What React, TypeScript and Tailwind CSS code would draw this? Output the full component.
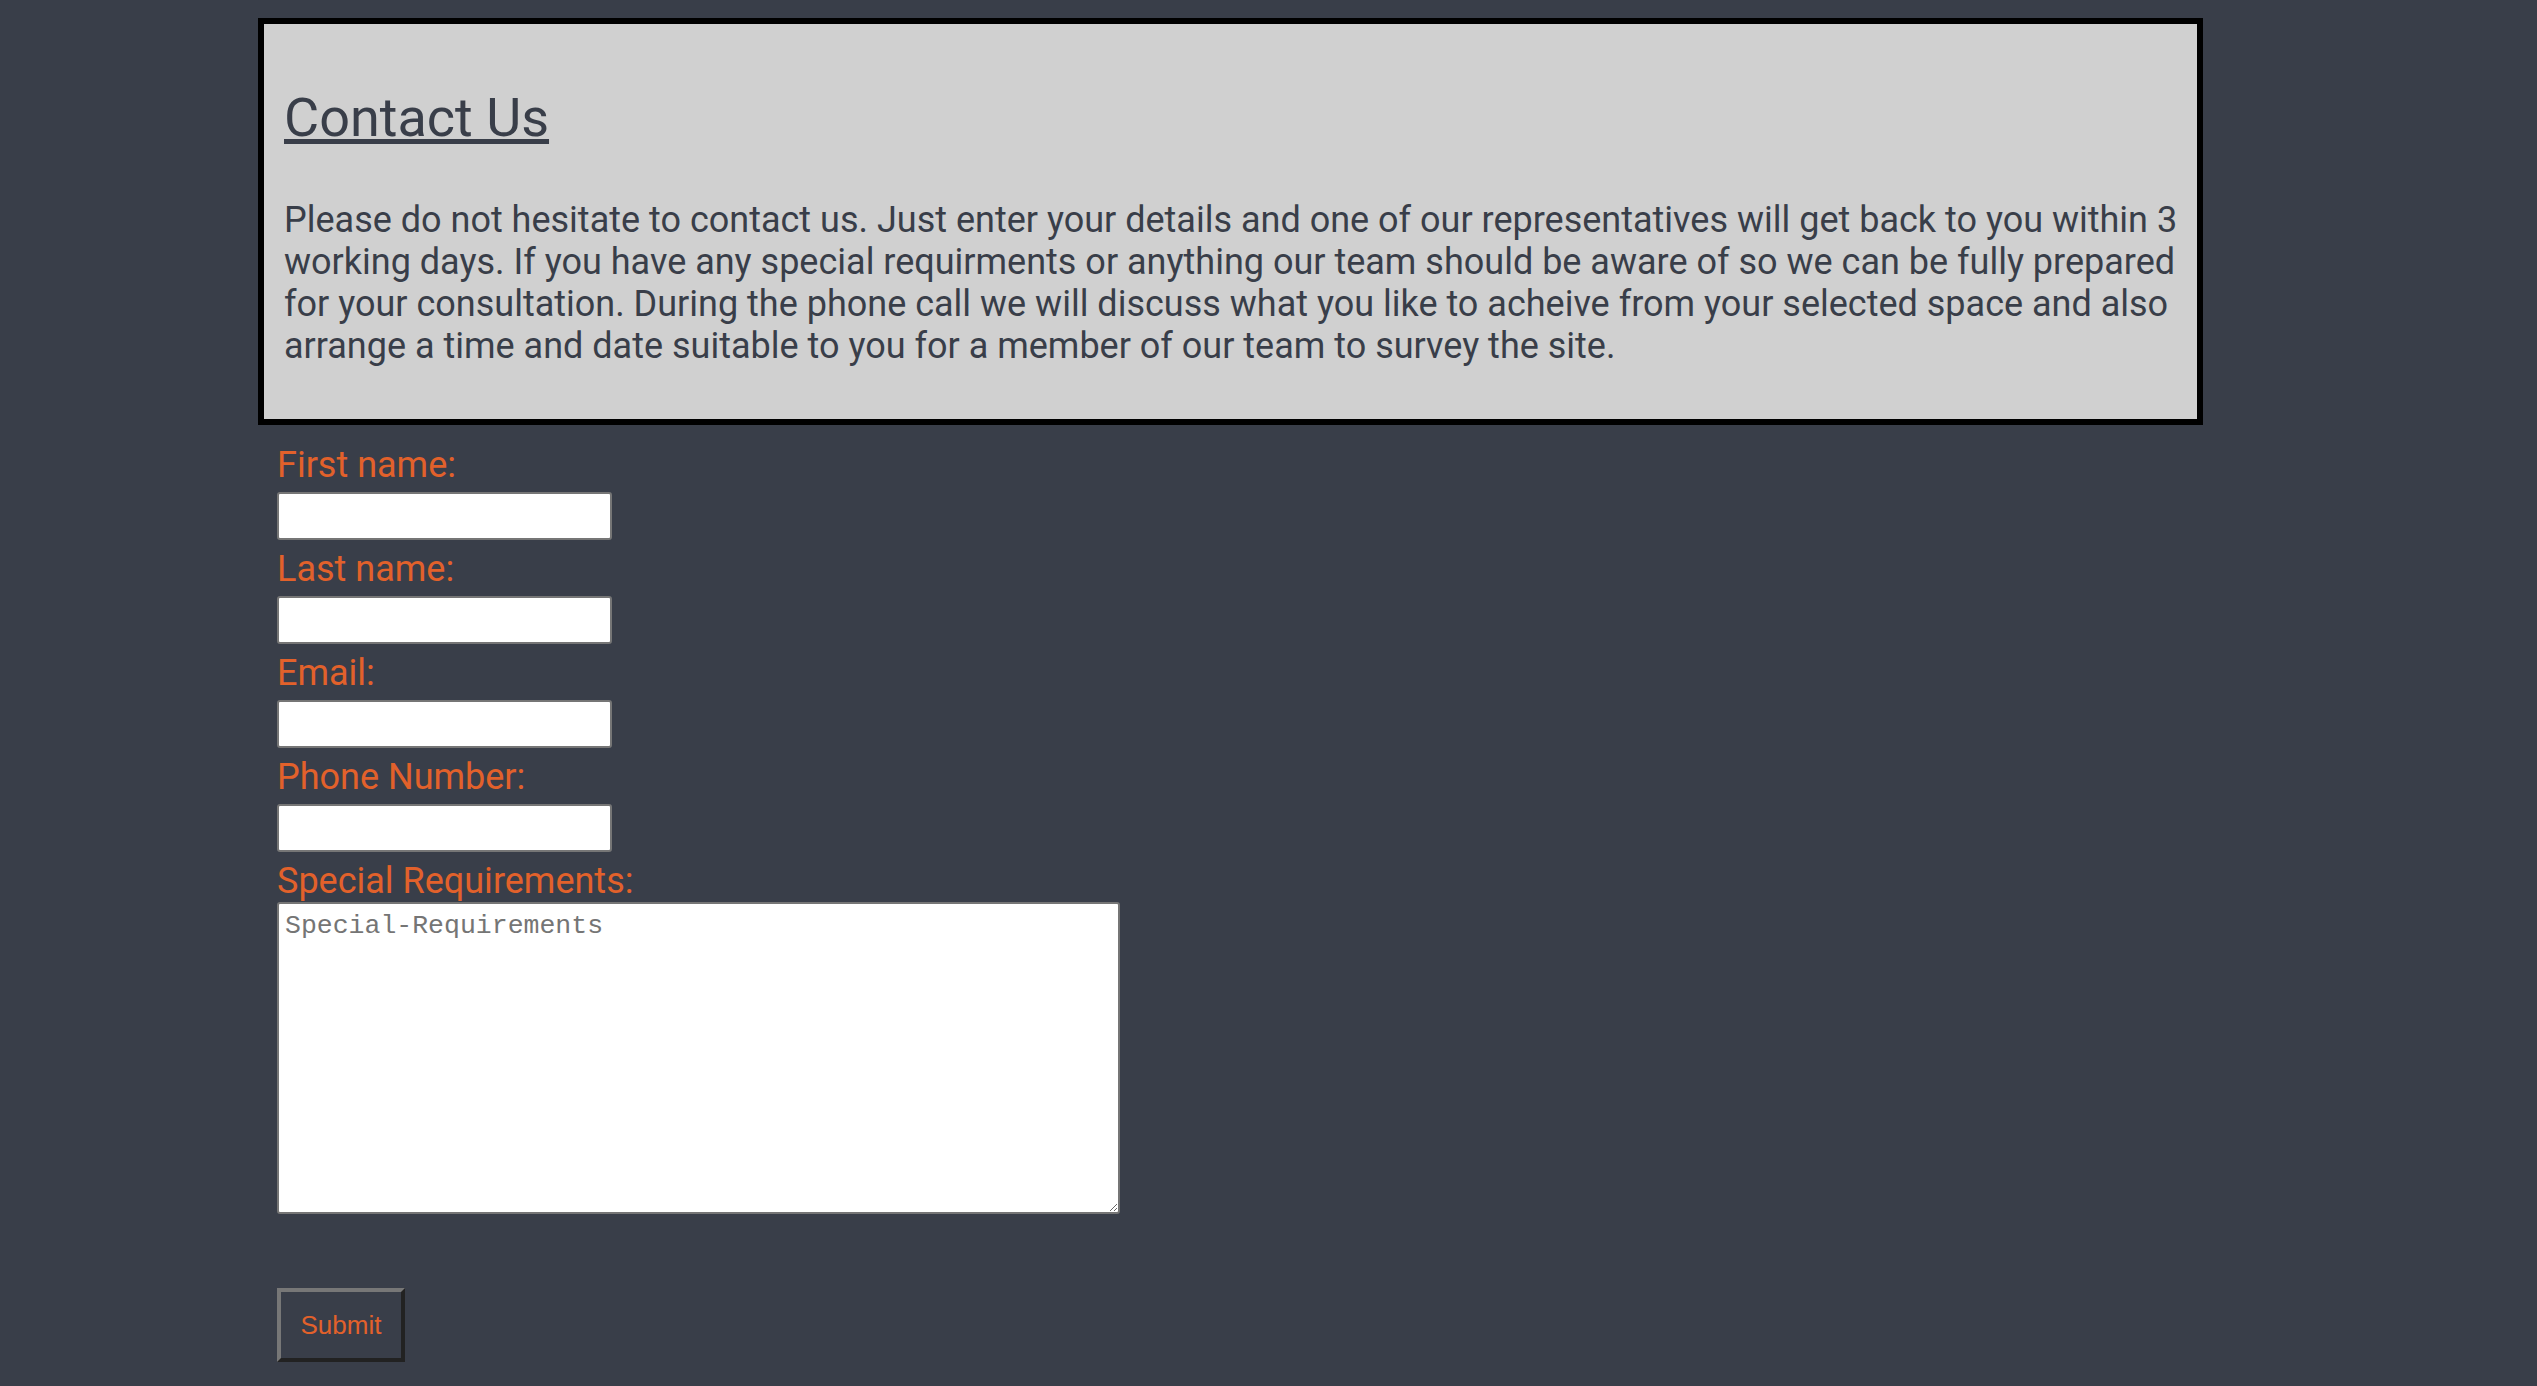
const fields = [
  { id: "fname", label: "First name:", type: "text" },
  { id: "lname", label: "Last name:", type: "text" },
  { id: "email", label: "Email:", type: "email" },
  { id: "phone", label: "Phone Number:", type: "tel" },
];

export default function App() {
  return (
    <div className="min-h-screen bg-[#393e49] pl-[258px] pt-[18px] pb-[24px] font-['Roboto',sans-serif]">
      <section className="w-[1945px] border-[6px] border-black bg-[#d0d0d0] pl-[20px] pr-[12px] pt-[62px] pb-[52px] text-[#393e49]">
        <h2 className="text-[54px] leading-[63px] font-normal underline">Contact Us</h2>
        <p className="mt-[50px] text-[36px] leading-[42px]">
          Please do not hesitate to contact us. Just enter your details and one of our representatives will get back to
          you within 3 working days. If you have any special requirments or anything our team should be aware of so we
          can be fully prepared for your consultation. During the phone call we will discuss what you like to acheive
          from your selected space and also arrange a time and date suitable to you for a member of our team to survey
          the site.
        </p>
      </section>

      <form className="ml-[19px] mt-[19px] flex flex-col items-start" onSubmit={(e) => e.preventDefault()}>
        {fields.map((f) => (
          <div key={f.id} className="flex flex-col items-start">
            <label htmlFor={f.id} className="text-[36px] leading-[42px] text-[#e2612b]">
              {f.label}
            </label>
            <input
              id={f.id}
              type={f.type}
              className="mt-[6px] mb-[8px] h-[48px] w-[335px] rounded-[3px] border-2 border-[#767676] bg-white px-1 text-[26px] outline-none"
            />
          </div>
        ))}
        <label htmlFor="special" className="text-[36px] leading-[42px] text-[#e2612b]">
          Special Requirements:
        </label>
        <textarea
          id="special"
          placeholder="Special-Requirements"
          className="h-[312px] w-[843px] rounded-[3px] border-2 border-[#767676] bg-white px-[6px] pt-[7px] font-['Liberation_Mono',monospace] text-[26.5px] leading-[30px] text-[#333] placeholder:text-[#757575] outline-none"
        />
        <button
          type="submit"
          className="mt-[74px] h-[74px] w-[128px] border-4 border-t-[#777] border-l-[#777] border-b-[#222] border-r-[#222] bg-transparent font-['Liberation_Sans',Arial,sans-serif] text-[26px] text-[#e2612b]"
        >
          Submit
        </button>
      </form>
    </div>
  );
}
